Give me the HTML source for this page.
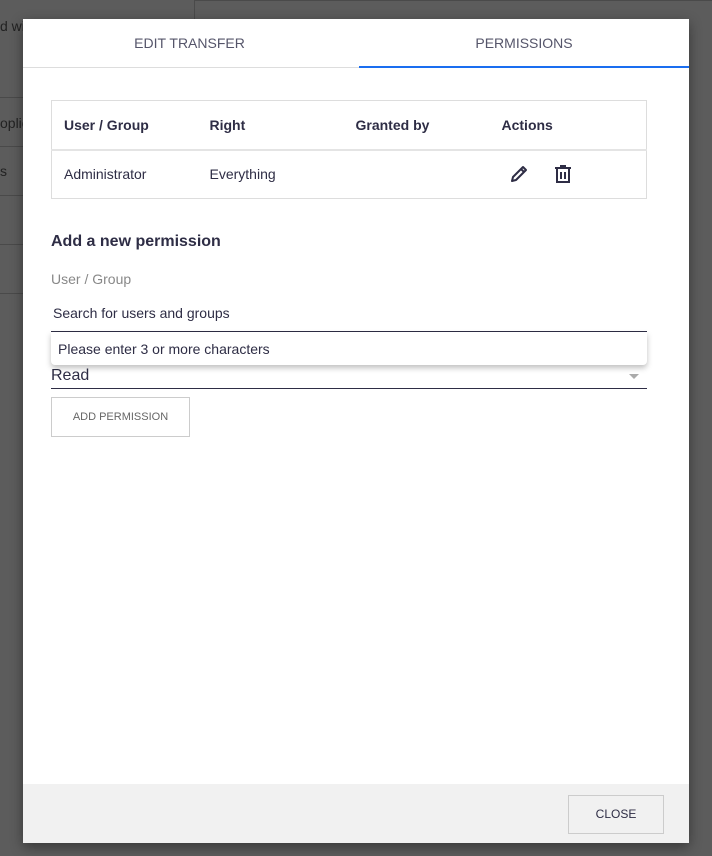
<!DOCTYPE html>
<html><head><meta charset="utf-8"><style>
*{box-sizing:border-box;margin:0;padding:0}
body{width:712px;height:856px;background:#5c5c5c;font-family:"Liberation Sans",sans-serif;position:relative;overflow:hidden;color:#2e2d45}
.bg{position:absolute;color:#222}
.ln{position:absolute;left:0;width:23px;height:1px;background:#4a4a4a}
.modal{position:absolute;left:23px;top:19px;width:666px;height:824px;background:#fff;box-shadow:0 4px 12px rgba(0,0,0,.4)}
.tabs{height:49px;border-bottom:1px solid #ddd;position:relative;font-size:14px}
.tab{position:absolute;top:16px;width:50%;text-align:center;color:#55556a}
.ind{position:absolute;left:336px;right:0;bottom:-1px;height:2px;background:#1a6ef0}
table{position:absolute;left:28px;top:81px;width:596px;border-collapse:collapse;border:1px solid #ddd;font-size:14px}
td,th{text-align:left;padding:0 12px;height:49px}
th{font-weight:bold;border-bottom:2px solid #e4e4e4}
.h{position:absolute;left:28px;font-size:16px;font-weight:bold}
.lbl{position:absolute;left:28px;top:252px;font-size:14px;color:#888}
.inp{position:absolute;left:28px;top:283px;width:596px;height:30px;border-bottom:1px solid #2e2d45;font-size:14px;padding:3px 2px}
.dd{position:absolute;left:28px;top:313px;width:596px;height:33px;background:#fff;border-radius:0 0 4px 4px;box-shadow:0 3px 6px rgba(0,0,0,.25);font-size:14px;padding:9px 7px;z-index:2}
.sel{position:absolute;left:28px;top:345px;width:596px;height:25px;border-bottom:1px solid #2e2d45;font-size:16px;padding-top:3px}
.btn{position:absolute;border:1px solid #ccc;font-size:11px;color:#666;text-align:center}
.foot{position:absolute;left:0;bottom:0;width:666px;height:59px;background:#f1f1f1}
</style></head><body>
<div class="bg" style="left:0;top:18px;font-size:14px">d wi</div>
<div class="bg" style="left:0;top:115px;font-size:14px">oplic</div>
<div class="bg" style="left:0;top:163px;font-size:14px">s</div>
<div class="ln" style="top:97px"></div><div class="ln" style="top:146px"></div><div class="ln" style="top:195px"></div><div class="ln" style="top:244px"></div><div class="ln" style="top:293px"></div>
<div style="position:absolute;left:194px;top:0;width:1px;height:19px;background:#4a4a4a"></div>
<div style="position:absolute;left:194px;top:0;width:518px;height:1px;background:#4a4a4a"></div>
<div class="modal">
<div class="tabs"><div class="tab" style="left:0">EDIT TRANSFER</div><div class="tab" style="left:336px;width:330px">PERMISSIONS</div><div class="ind"></div></div>
<table><tr><th style="width:146px">User / Group</th><th style="width:146px">Right</th><th style="width:146px">Granted by</th><th>Actions</th></tr>
<tr><td>Administrator</td><td>Everything</td><td></td><td>
<svg width="22" height="22" viewBox="0 0 22 22" style="vertical-align:middle;margin-left:6px"><path d="M4 18l1-4L15 4l3 3L8 17z M13 6l3 3" fill="none" stroke="#2e2d45" stroke-width="2" stroke-linejoin="round"/></svg>
<svg width="20" height="22" viewBox="0 0 20 22" style="vertical-align:middle;margin-left:20px"><path d="M2 5h16M8 5V3h4v2M4 6v13h12V6M8 9v7M12 9v7" fill="none" stroke="#2e2d45" stroke-width="2"/></svg>
</td></tr></table>
<div class="h" style="top:214px">Add a new permission</div>
<div class="lbl">User / Group</div>
<div class="inp">Search for users and groups</div>
<div class="dd">Please enter 3 or more characters</div>
<div class="sel">Read<span style="position:absolute;right:8px;top:10px;border:5px solid transparent;border-top-color:#aaa"></span></div>
<div class="btn" style="left:28px;top:378px;width:139px;height:40px;line-height:38px">ADD PERMISSION</div>
<div class="foot"><div class="btn" style="left:545px;top:11px;width:96px;height:39px;line-height:37px;font-size:12px;color:#2e2d45">CLOSE</div></div>
</div>
</body></html>
